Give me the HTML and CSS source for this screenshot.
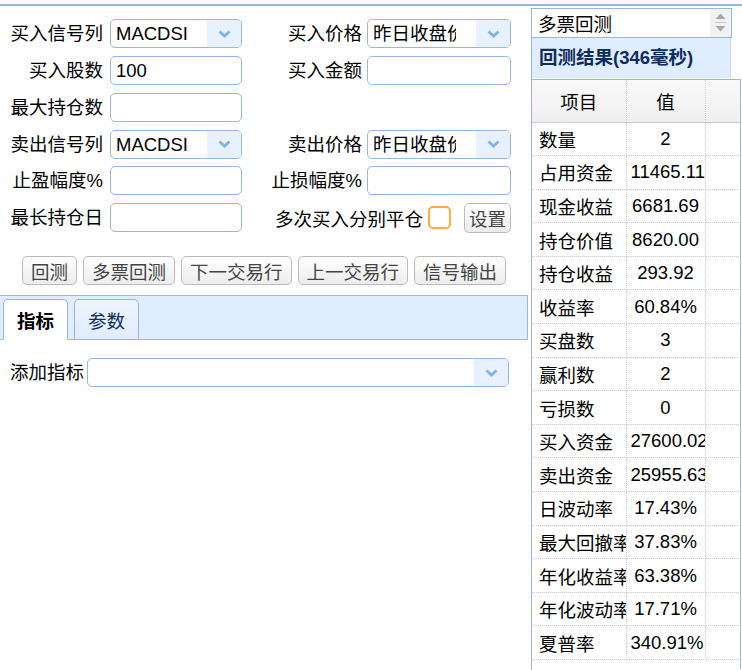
FILE: index.html
```html
<!DOCTYPE html>
<html lang="zh">
<head>
<meta charset="utf-8">
<title>回测</title>
<link rel="stylesheet" href="styles.css">
</head>
<body>
<div class="topline"></div>
<div class="main">
  <div class="left">
    <div class="form">
      <span class="lbl">买入信号列</span>
      <div class="combo"><span class="val v1">MACDSI</span><span class="arrow"><svg width="13" height="8" viewBox="0 0 13 8"><path d="M1.5 1.5 L6.5 6 L11.5 1.5" fill="none" stroke="#7fb5e6" stroke-width="2.8"/></svg></span></div>
      <span class="lbl">买入价格</span>
      <div class="combo r"><span class="val v2">昨日收盘价</span><span class="arrow"><svg width="13" height="8" viewBox="0 0 13 8"><path d="M1.5 1.5 L6.5 6 L11.5 1.5" fill="none" stroke="#7fb5e6" stroke-width="2.8"/></svg></span></div>

      <span class="lbl">买入股数</span>
      <div class="text"><span class="val">100</span></div>
      <span class="lbl">买入金额</span>
      <div class="text r"></div>

      <span class="lbl">最大持仓数</span>
      <div class="text"></div>
      <span></span>
      <span></span>

      <span class="lbl">卖出信号列</span>
      <div class="combo"><span class="val v1">MACDSI</span><span class="arrow"><svg width="13" height="8" viewBox="0 0 13 8"><path d="M1.5 1.5 L6.5 6 L11.5 1.5" fill="none" stroke="#7fb5e6" stroke-width="2.8"/></svg></span></div>
      <span class="lbl">卖出价格</span>
      <div class="combo r"><span class="val v2">昨日收盘价</span><span class="arrow"><svg width="13" height="8" viewBox="0 0 13 8"><path d="M1.5 1.5 L6.5 6 L11.5 1.5" fill="none" stroke="#7fb5e6" stroke-width="2.8"/></svg></span></div>

      <span class="lbl">止盈幅度%</span>
      <div class="text"></div>
      <span class="lbl">止损幅度%</span>
      <div class="text r"></div>

      <span class="lbl">最长持仓日</span>
      <div class="text"></div>
      <div class="multi">
        <span class="mlbl">多次买入分别平仓</span>
        <span class="check"></span>
        <span class="btn setbtn">设置</span>
      </div>
    </div>

    <div class="btns">
      <span class="btn">回测</span>
      <span class="btn">多票回测</span>
      <span class="btn">下一交易行</span>
      <span class="btn">上一交易行</span>
      <span class="btn">信号输出</span>
    </div>

    <div class="tabs">
      <span class="tab active">指标</span>
      <span class="tab">参数</span>
    </div>
    <div class="tabbody">
      <span class="lbl addl">添加指标</span>
      <div class="combo wide"><span class="val"></span><span class="arrow"><svg width="13" height="8" viewBox="0 0 13 8"><path d="M1.5 1.5 L6.5 6 L11.5 1.5" fill="none" stroke="#7fb5e6" stroke-width="2.8"/></svg></span></div>
    </div>
  </div>

  <div class="right">
    <div class="sel">
      <span class="selval">多票回测</span>
      <span class="spin"><svg width="13" height="22" viewBox="0 0 13 22"><path d="M1.5 7 L6.5 1.5 L11.5 7 Z" fill="#a8a8a8"/><path d="M1 10.5 H12" stroke="#c8c8c8" stroke-width="1"/><path d="M1.5 14 L6.5 19.5 L11.5 14 Z" fill="#a8a8a8"/></svg></span>
    </div>
    <div class="phead">回测结果(346毫秒)</div>
    <div class="gridwrap">
      <table class="grid">
        <thead>
          <tr><th class="c1">项目</th><th class="c2">值</th><th class="c3"></th></tr>
        </thead>
        <tbody>
          <tr><td class="c1">数量</td><td class="c2">2</td><td class="c3"></td></tr>
          <tr><td class="c1">占用资金</td><td class="c2">11465.11</td><td class="c3"></td></tr>
          <tr><td class="c1">现金收益</td><td class="c2">6681.69</td><td class="c3"></td></tr>
          <tr><td class="c1">持仓价值</td><td class="c2">8620.00</td><td class="c3"></td></tr>
          <tr><td class="c1">持仓收益</td><td class="c2">293.92</td><td class="c3"></td></tr>
          <tr><td class="c1">收益率</td><td class="c2">60.84%</td><td class="c3"></td></tr>
          <tr><td class="c1">买盘数</td><td class="c2">3</td><td class="c3"></td></tr>
          <tr><td class="c1">赢利数</td><td class="c2">2</td><td class="c3"></td></tr>
          <tr><td class="c1">亏损数</td><td class="c2">0</td><td class="c3"></td></tr>
          <tr><td class="c1">买入资金</td><td class="c2">27600.02</td><td class="c3"></td></tr>
          <tr><td class="c1">卖出资金</td><td class="c2">25955.63</td><td class="c3"></td></tr>
          <tr><td class="c1">日波动率</td><td class="c2">17.43%</td><td class="c3"></td></tr>
          <tr><td class="c1">最大回撤率</td><td class="c2">37.83%</td><td class="c3"></td></tr>
          <tr><td class="c1">年化收益率</td><td class="c2">63.38%</td><td class="c3"></td></tr>
          <tr><td class="c1">年化波动率</td><td class="c2">17.71%</td><td class="c3"></td></tr>
          <tr><td class="c1">夏普率</td><td class="c2">340.91%</td><td class="c3"></td></tr>
        </tbody>
      </table>
    </div>
  </div>
</div>
</body>
</html>
```
FILE: styles.css
```css
* { box-sizing: border-box; }
html, body {
  margin: 0;
  padding: 0;
  background: #fff;
}
body {
  width: 742px;
  height: 670px;
  overflow: hidden;
  font-family: "Liberation Sans", "Noto Sans CJK SC", sans-serif;
  font-size: 18.5px;
  color: #000;
}
.topline {
  margin-top: 4px;
  height: 2px;
  background: #95b8e7;
}
.main {
  display: flex;
  align-items: flex-start;
}
.left {
  width: 528px;
  flex: none;
}
.form {
  display: grid;
  grid-template-columns: 103px 139px 120px 149px;
  grid-auto-rows: 29px;
  row-gap: 7.85px;
  padding-top: 13px;
}
.lbl {
  text-align: right;
  line-height: 29px;
  white-space: nowrap;
}
.combo, .text {
  height: 29px;
  margin-left: 7px;
  border: 1px solid #95b8e7;
  border-radius: 5px;
  background: #fff;
  display: flex;
  align-items: center;
  overflow: hidden;
}
.combo.r, .text.r { margin-left: 5px; }
.val {
  flex: 1;
  padding-left: 5px;
  white-space: nowrap;
  overflow: hidden;
  line-height: 27px;
}
.v2 { flex: none; width: 88px; }
.v2 + .arrow { margin-left: auto; }
.arrow {
  flex: none;
  width: 34px;
  height: 27px;
  background: #e8f1ff;
  display: flex;
  align-items: center;
  justify-content: center;
}
.multi {
  grid-column: 3 / 5;
  display: flex;
  align-items: center;
  justify-content: flex-end;
}
.mlbl { white-space: nowrap; }
.check {
  width: 23px;
  height: 23px;
  border: 2px solid #ffab40;
  border-radius: 5px;
  margin-left: 5px;
}
.btn {
  display: inline-flex;
  align-items: center;
  height: 29px;
  padding: 0 8px;
  border: 1px solid #bbb;
  border-radius: 5px;
  background: linear-gradient(#ffffff, #ececec);
  color: #444;
  white-space: nowrap;
}
.setbtn {
  margin-left: 13px;
  padding: 0 4px;
  height: 30px;
}
.btns {
  display: flex;
  gap: 6px;
  padding-left: 22px;
  margin-top: 24px;
}
.tabs {
  margin-top: 10px;
  height: 45px;
  background: #e0ecff;
  border-top: 1px solid #95b8e7;
  border-right: 1px solid #95b8e7;
  border-bottom: 1px solid #95b8e7;
  display: flex;
  align-items: flex-end;
  padding-left: 3px;
  gap: 6px;
}
.tab {
  width: 65px;
  height: 41px;
  margin-bottom: -1px;
  border: 1px solid #95b8e7;
  border-radius: 5px 5px 0 0;
  background: linear-gradient(#eff5ff, #e0ecff);
  color: #0e2d5f;
  display: flex;
  align-items: center;
  justify-content: center;
}
.tab.active {
  background: #fff;
  border-bottom-color: #fff;
  font-weight: bold;
  color: #000;
}
.tabbody {
  display: flex;
  align-items: center;
  padding: 18px 0 0 10px;
}
.addl { margin-right: 3px; }
.combo.wide { width: 422px; margin-left: 0; }

.right {
  width: 211px;
  flex: none;
  margin-left: 3px;
  margin-top: 2px;
  height: 662px;
  border-left: 1px solid #95b8e7;
}
.sel {
  width: 200px;
  height: 30px;
  border: 1px solid #95b8e7;
  border-left: none;
  display: flex;
  align-items: center;
  padding-left: 6px;
}
.selval { flex: 1; white-space: nowrap; }
.spin {
  width: 21px;
  height: 28px;
  background: #f2f2f2;
  display: flex;
  align-items: center;
  justify-content: center;
}
.phead {
  width: 199px;
  height: 40px;
  background: #e0ecff;
  color: #0e2d5f;
  font-weight: bold;
  line-height: 40px;
  padding-left: 7px;
  white-space: nowrap;
  border-right: 1px solid #c9dcf5;
}
.gridwrap {
  margin-top: 1px;
  border-top: 1px solid #95b8e7;
  border-right: 1px solid #95b8e7;
  width: 209px;
  height: 590px;
  overflow: hidden;
}
.grid {
  border-collapse: collapse;
  table-layout: fixed;
  width: 208px;
}
.grid th, .grid td {
  padding: 0 5px;
  white-space: nowrap;
  overflow: hidden;
  border-right: 1px dotted #ccc;
  border-bottom: 1px dotted #ccc;
}
.grid th {
  height: 42px;
  font-weight: normal;
  background: linear-gradient(#f9f9f9, #efefef);
  border-bottom: 1px solid #ccc;
  text-align: center;
}
.grid td { height: 33.6px; }
.c1 { width: 94px; text-align: left; }
.c2 { width: 79px; text-align: center; }
.c3 { width: 35px; }
.grid td.c1 { padding-left: 7px; padding-right: 0; }
.grid td.c2 { padding: 0 4px; text-overflow: clip; }
```
